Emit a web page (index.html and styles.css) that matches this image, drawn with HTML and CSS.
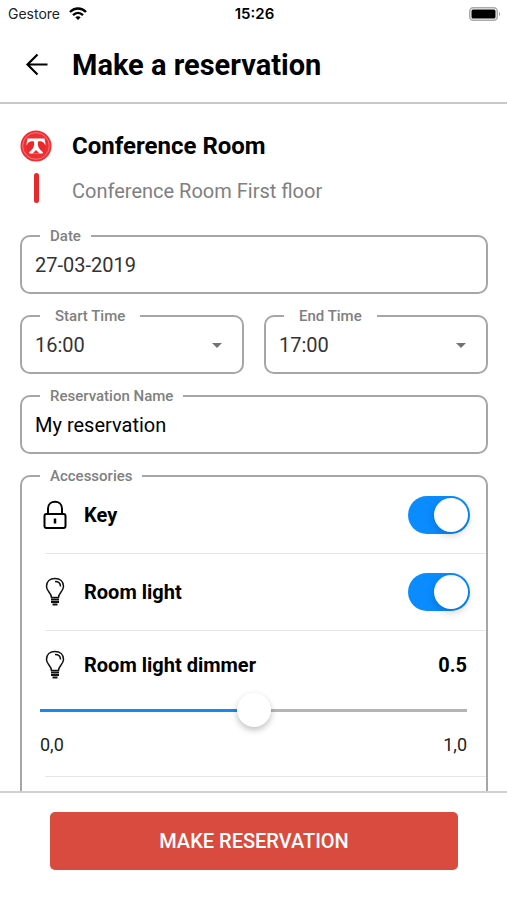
FILE: index.html
```html
<!DOCTYPE html>
<html lang="en">
<head>
    <meta charset="UTF-8">
    <meta name="viewport" content="width=device-width, initial-scale=1.0">
    <title>Make a reservation</title>
    <link rel="stylesheet" href="styles.css">
</head>
<body>
    <div class="status-bar">
        <div class="carrier">
            <span>Gestore</span>
            <svg width="18" height="13" viewBox="0 0 18 13" fill="none" stroke="#000" stroke-width="2.400">
                <path d="M1 5C5.500 .4 12.500 .4 17 5"/>
                <path d="M4 8.200C7 5.300 11 5.300 14 8.200"/>
                <path d="M9 13L6.300 10.200C7.800 8.900 10.200 8.900 11.700 10.200Z" fill="#000" stroke="none"/>
            </svg>
        </div>
        <span class="clock">15:26</span>
        <svg class="battery" width="32" height="14" viewBox="0 0 32 14">
            <rect x=".75" y=".75" width="27.500" height="12.500" rx="3.500" fill="#fff" stroke="#aaa" stroke-width="1.500"/>
            <rect x="2.500" y="2.500" width="24" height="9" rx="1.500" fill="#000"/>
            <path d="M30 5C31.500 5.500 31.500 8.500 30 9Z" fill="#999"/>
        </svg>
    </div>

    <header class="header">
        <button type="button" class="back" aria-label="Back">
            <svg width="24" height="24" viewBox="0 0 24 24" fill="none" stroke="#000" stroke-width="2.200">
                <path d="M23.500 11.500H4M13.500 1.500L3.500 11.500L13.500 21.500"/>
            </svg>
        </button>
        <h1>Make a reservation</h1>
    </header>

    <main class="content">
        <div class="room">
            <svg width="32" height="32" viewBox="0 0 32 32">
                <circle cx="16" cy="16" r="15.500" fill="#ee3035"/>
                <circle cx="16" cy="16" r="13.300" fill="none" stroke="#f4777a" stroke-width="1"/>
                <path d="M7.500 8.500H24.500L25.500 14L22.500 23.500H9.500L6.500 14Z" fill="#fff"/>
                <path d="M6.500 18C6.500 13 9.500 10.500 14 11.500C15 16 12.500 20.500 8 22.500Z" fill="#e8282d"/>
                <path d="M25.500 18C25.500 13 22.500 10.500 18 11.500C17 16 19.500 20.500 24 22.500Z" fill="#e8282d"/>
                <path d="M16 20L12.500 23.500H19.500Z" fill="#ee3035"/>
            </svg>
            <h2>Conference Room</h2>
            <span class="room-bar"></span>
            <p>Conference Room First floor</p>
        </div>

        <form id="reservationForm" class="form">
            <fieldset class="field">
                <legend><label for="date">Date</label></legend>
                <input type="text" id="date" value="27-03-2019">
            </fieldset>

            <div class="times">
                <fieldset class="field field-time">
                    <legend><label for="startTime">Start Time</label></legend>
                    <div class="select">
                        <select id="startTime">
                            <option>16:00</option>
                        </select>
                        <svg width="10" height="5" viewBox="0 0 10 5"><path d="M0 0H10L5 5Z" fill="#737373"/></svg>
                    </div>
                </fieldset>
                <fieldset class="field field-time">
                    <legend><label for="endTime">End Time</label></legend>
                    <div class="select">
                        <select id="endTime">
                            <option>17:00</option>
                        </select>
                        <svg width="10" height="5" viewBox="0 0 10 5"><path d="M0 0H10L5 5Z" fill="#737373"/></svg>
                    </div>
                </fieldset>
            </div>

            <fieldset class="field field-name">
                <legend><label for="reservationName">Reservation Name</label></legend>
                <input type="text" id="reservationName" value="My reservation">
            </fieldset>

            <fieldset class="field accessories">
                <legend>Accessories</legend>
                <div class="item">
                    <div class="row">
                        <svg class="icon" viewBox="0 0 20 30" fill="none" stroke="#000" stroke-width="2">
                            <rect x="-.5" y="14" width="21" height="14" rx="2"/>
                            <path d="M3 14V8.500C3 -.5 17 -.5 17 8.500V14"/>
                            <path d="M10 18.500V23.500" stroke-width="2.500"/>
                        </svg>
                        <label for="key">Key</label>
                        <input type="checkbox" id="key" class="toggle" checked>
                    </div>
                </div>
                <div class="item">
                    <div class="row">
                        <svg class="icon" viewBox="0 0 20 30" fill="none" stroke="#111" stroke-width="1.500">
                            <path d="M6.500 20.500C6.500 16 1.500 14.500 1.500 9.500C1.500 4.500 5 1.500 10 1.500S18.500 4.500 18.500 9.500C18.500 14.500 13.500 16 13.500 20.500Z"/>
                            <path d="M10 4.500C13.500 4.500 15.500 6.500 15.500 9.500"/>
                            <path d="M6 22.500H14M6 25H14M7.500 27.500H12.500" stroke-width="2"/>
                        </svg>
                        <label for="roomLight">Room light</label>
                        <input type="checkbox" id="roomLight" class="toggle" checked>
                    </div>
                </div>
                <div class="item">
                    <div class="row">
                        <svg class="icon" viewBox="0 0 20 30" fill="none" stroke="#111" stroke-width="1.500">
                            <path d="M6.500 20.500C6.500 16 1.500 14.500 1.500 9.500C1.500 4.500 5 1.500 10 1.500S18.500 4.500 18.500 9.500C18.500 14.500 13.500 16 13.500 20.500Z"/>
                            <path d="M10 4.500C13.500 4.500 15.500 6.500 15.500 9.500"/>
                            <path d="M6 22.500H14M6 25H14M7.500 27.500H12.500" stroke-width="2"/>
                        </svg>
                        <label for="dimmer">Room light dimmer</label>
                        <output for="dimmer">0.5</output>
                    </div>
                    <div class="slider">
                        <input type="range" id="dimmer" min="0" max="1" step="0.1" value="0.5">
                        <div class="scale"><span>0,0</span><span>1,0</span></div>
                    </div>
                </div>
            </fieldset>
        </form>
    </main>

    <footer class="footer">
        <button type="submit" form="reservationForm" class="submit">MAKE RESERVATION</button>
    </footer>
</body>
</html>
```
FILE: styles.css
```css
* {
    box-sizing: border-box;
}

body {
    font-family: Roboto, Arial, sans-serif;
    margin: 0;
    height: 100vh;
    display: flex;
    flex-direction: column;
    background: #fff;
    color: #000;
}

h1,
h2,
p {
    margin: 0;
}

.status-bar {
    display: grid;
    grid-template-columns: 1fr auto 1fr;
    align-items: center;
    height: 27px;
    padding: 0 6px 0 8px;
    font-family: Inter, sans-serif;
    font-size: 14px;
    flex-shrink: 0;
}

.carrier {
    display: flex;
    align-items: center;
    gap: 9px;
    color: #222;
}

.clock {
    font-size: 15px;
    font-weight: 600;
}

.battery {
    justify-self: end;
}

/* Header */
.header {
    display: flex;
    align-items: center;
    gap: 24px;
    height: 77px;
    padding: 0 24px;
    border-bottom: 2px solid #c8c8c8;
    flex-shrink: 0;
}

.back {
    display: flex;
    padding: 0;
    border: none;
    background: none;
    cursor: pointer;
}

h1 {
    font-size: 29px;
    font-weight: 700;
}

.content {
    flex: 1;
    min-height: 0;
    overflow: hidden;
    padding: 24px 19px 0 20px;
}

/* Room name with the line icon */
.room {
    display: grid;
    grid-template-columns: 32px 1fr;
    grid-template-rows: 36px 48px;
    column-gap: 20px;
    align-items: center;
    margin-bottom: 15px;
}

h2 {
    font-size: 24px;
    font-weight: 700;
}

.room p {
    padding-top: 6px;
    font-size: 20px;
    color: #808080;
}

.room-bar {
    justify-self: center;
    width: 5px;
    height: 30px;
    border-radius: 3px;
    background: #e8282d;
}

/* Form fields */
.form {
    display: flex;
    flex-direction: column;
    gap: 13px;
}

.times {
    display: grid;
    grid-template-columns: 1fr 1fr;
    gap: 20px;
}

.field {
    min-width: 0;
    margin: 0;
    padding: 0 0 7px;
    border: 2px solid #a6a6a6;
    border-radius: 10px;
}

legend {
    margin-left: 18px;
    padding: 0 10px;
    font-size: 15px;
    line-height: 18px;
    font-weight: 500;
    color: #808080;
}

.field-time legend {
    padding: 0 15px;
}

.field input[type="text"],
.field select {
    display: block;
    width: 100%;
    height: 40px;
    padding: 0 13px;
    border: none;
    outline: none;
    background: none;
    font-family: inherit;
    font-size: 20px;
    color: #333;
}

.field-name input[type="text"] {
    color: #000;
}

.select {
    display: grid;
    align-items: center;
}

.select > * {
    grid-area: 1 / 1;
}

.field select {
    appearance: none;
}

.select svg {
    justify-self: end;
    margin-right: 20px;
    pointer-events: none;
}

/* Accessories */
.accessories {
    padding: 0 0 40px;
}

.item {
    margin-left: 23px;
    padding: 19px 0;
    border-bottom: 1px solid #e6e6e6;
}

legend + .item {
    padding-top: 11px;
}

.row {
    display: flex;
    align-items: center;
    gap: 19px;
    padding-right: 16px;
    font-size: 20px;
    font-weight: 700;
}

.row label {
    flex: 1;
}

.row output {
    margin-right: 3px;
}

.icon {
    width: 20px;
    height: 30px;
    overflow: visible;
}

.toggle {
    appearance: none;
    width: 62px;
    height: 38px;
    margin: 0;
    padding: 2px;
    border-radius: 19px;
    background: #ccc;
    cursor: pointer;
}

.toggle::before {
    content: "";
    display: block;
    width: 34px;
    height: 34px;
    border-radius: 50%;
    background: #fff;
    box-shadow: 0 3px 8px rgba(0, 0, 0, 0.2);
}

.toggle:checked {
    background: #0a8cff;
}

.toggle:checked::before {
    margin-left: auto;
}

.slider {
    margin: 13px 19px 0 -5px;
}

.slider input {
    appearance: none;
    display: block;
    width: 100%;
    height: 34px;
    margin: 0;
    background: none;
}

.slider input::-webkit-slider-runnable-track {
    height: 3px;
    background: linear-gradient(to right, #1a88ec 50%, #b5b5b5 50%);
}

.slider input::-webkit-slider-thumb {
    appearance: none;
    width: 34px;
    height: 34px;
    margin-top: -16px;
    border-radius: 50%;
    background: #fff;
    box-shadow: 0 3px 6px rgba(0, 0, 0, 0.25);
}

.scale {
    display: flex;
    justify-content: space-between;
    margin-top: 6px;
    font-size: 18px;
    line-height: 24px;
    color: #222;
}

/* Footer */
.footer {
    padding: 19px 49px 30px 50px;
    border-top: 2px solid #d0d0d0;
    flex-shrink: 0;
}

.submit {
    display: block;
    width: 100%;
    height: 58px;
    border: none;
    border-radius: 5px;
    background: #d94b3e;
    color: #fff;
    font-family: inherit;
    font-size: 20px;
    font-weight: 500;
    cursor: pointer;
}
```
